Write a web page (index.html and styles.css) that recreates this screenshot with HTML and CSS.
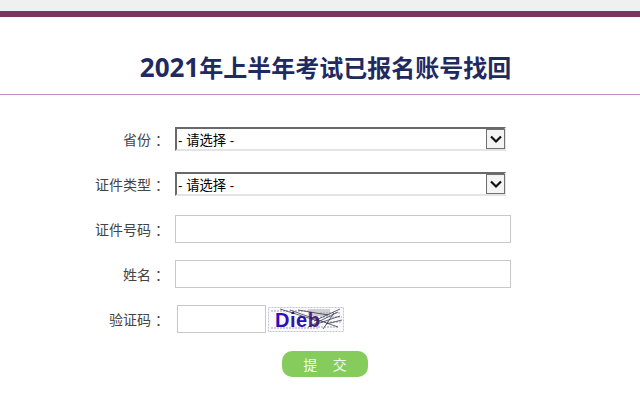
FILE: index.html
```html
<!DOCTYPE html>
<html lang="zh-CN">
    <head>
        <meta charset="UTF-8">
        <title>账号找回</title>
        <link rel="stylesheet" href="styles.css">
    </head>
    <body>
        <div class="top-bar"></div>
        <h1 class="title"><span class="year">2021</span>年上半年考试已报名账号找回</h1>
        <form class="form">
            <div class="row row-select">
                <label class="label">省份 ：</label>
                <div class="select-box">
                    <select class="select"><option>- 请选择 -</option></select>
                    <span class="select-arrow">
                        <svg width="14" height="9" viewBox="0 0 14 9"><path d="M2 1.5 L7 6.5 L12 1.5" fill="none" stroke="#111" stroke-width="2.2"/></svg>
                    </span>
                </div>
            </div>
            <div class="row row-select">
                <label class="label">证件类型 ：</label>
                <div class="select-box">
                    <select class="select"><option>- 请选择 -</option></select>
                    <span class="select-arrow">
                        <svg width="14" height="9" viewBox="0 0 14 9"><path d="M2 1.5 L7 6.5 L12 1.5" fill="none" stroke="#111" stroke-width="2.2"/></svg>
                    </span>
                </div>
            </div>
            <div class="row">
                <label class="label">证件号码 ：</label>
                <input type="text" class="input">
            </div>
            <div class="row">
                <label class="label">姓名 ：</label>
                <input type="text" class="input">
            </div>
            <div class="row row-code">
                <label class="label">验证码 ：</label>
                <input type="text" class="input input-code">
                <svg class="captcha" width="76" height="25" viewBox="0 0 76 25">
                    <rect x="0.5" y="0.5" width="75" height="24" fill="#fafafc" stroke="#c4c4d0" stroke-dasharray="2 1"/>
                    <path d="M40 2 H62 V9 H40 Z" fill="#d0d0d0"/>
                    <path d="M3 4 H40 M3 21 H50 M52 6 H72 M52 10 H74 M50 15 H73 M50 20 H70" stroke="#a0a0c4" stroke-dasharray="2 1"/>
                    <text x="7" y="20" class="captcha-text">D<tspan class="captcha-mid">i</tspan>e<tspan class="captcha-end">b</tspan></text>
                    <path d="M12 2 L50 14 M22 3 L70 20 M46 14 L72 2 M40 20 L72 9 M55 22 L66 6 M30 3 L60 8 M58 17 L74 13 M44 18 L70 5" stroke="#223" stroke-width="0.7" fill="none"/>
                </svg>
            </div>
            <div class="actions">
                <button type="button" class="submit">提&nbsp;&nbsp;&nbsp;&nbsp;交</button>
            </div>
        </form>
    </body>
</html>
```

FILE: styles.css
```css
body {
    margin: 0;
    background-color: #fff;
    font-family: "Liberation Sans", "Noto Sans CJK SC", sans-serif;
    color: #444;
    font-size: 14px;
}

/* Header */

.top-bar {
    height: 6px;
    background-color: #7a3560;
    border-top: 11px solid #f0f0f0;
}

.title {
    margin: 0;
    height: 78px;
    box-sizing: border-box;
    padding: 33px 0 0 11px;
    border-bottom: 1px solid #c490c8;
    text-align: center;
    font-family: "Noto Sans CJK SC", sans-serif;
    font-size: 24px;
    line-height: 34px;
    font-weight: bold;
    color: #1f2a60;
}

.year {
    font-family: "Open Sans", sans-serif;
    font-size: 26px;
}

/* Form rows */

.form {
    padding-top: 32px;
}

.row {
    display: flex;
    align-items: center;
    height: 28px;
    margin-bottom: 17px;
}

.row-select {
    height: 24px;
    margin-bottom: 21px;
}

.row-select + .row:not(.row-select) {
    margin-top: -2px;
}

.row-code {
    margin-bottom: 18px;
}

.label {
    width: 169px;
    margin-right: 6px;
    flex-shrink: 0;
    text-align: right;
    white-space: nowrap;
}

/* Selects */

.select-box {
    position: relative;
    width: 331px;
    height: 24px;
}

.select {
    appearance: none;
    display: block;
    width: 100%;
    height: 100%;
    box-sizing: border-box;
    margin: 0;
    padding: 2px 0 0 1px;
    border: 2px solid;
    border-color: #696969 #e4e4e4 #e4e4e4 #696969;
    border-radius: 0;
    background-color: #fff;
    font-family: inherit;
    font-size: 13.33px;
    color: #000;
}

.select-arrow {
    position: absolute;
    top: 2px;
    right: 1px;
    display: flex;
    align-items: center;
    justify-content: center;
    width: 19px;
    height: 20px;
    box-sizing: border-box;
    border: 1px solid #707070;
    background-color: #f4f4f4;
}

/* Inputs */

.input {
    width: 336px;
    height: 28px;
    box-sizing: border-box;
    margin: 0;
    border: 1px solid #c8c8c8;
    background-color: #fff;
}

.input-code {
    width: 89px;
    margin-left: 2px;
}

.captcha {
    margin: 1px 0 0 2px;
}

.captcha-text {
    font-family: "Liberation Sans", sans-serif;
    font-size: 20px;
    font-weight: bold;
    fill: #2c10b8;
    letter-spacing: 0.5px;
}

.captcha-mid {
    fill: #3a10a8;
}

.captcha-end {
    fill: #5a2090;
}

/* Submit */

.actions {
    padding-left: 282px;
}

.submit {
    display: block;
    width: 86px;
    height: 26px;
    padding: 0;
    border: none;
    border-radius: 10px;
    background-color: #86cc5c;
    color: #f2f8ec;
    font-family: inherit;
    font-size: 14px;
}
```
